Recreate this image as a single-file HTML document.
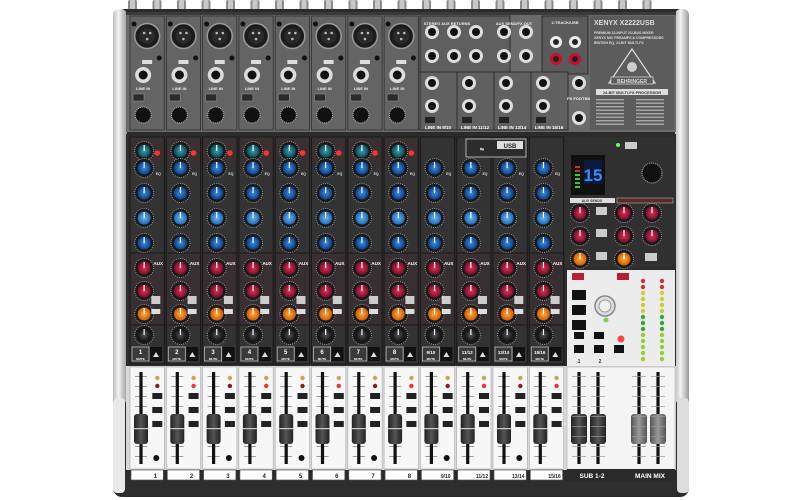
<!DOCTYPE html>
<html><head><meta charset="utf-8"><style>
html,body{margin:0;padding:0;background:#fff;width:800px;height:500px;overflow:hidden}
svg{display:block}
text{font-family:"Liberation Sans",sans-serif;font-weight:bold}
</style></head><body>
<svg id="s" width="800" height="500" viewBox="0 0 800 500" xmlns="http://www.w3.org/2000/svg">
<defs>
<linearGradient id="cheek" x1="0" x2="1"><stop offset="0" stop-color="#bdbdbd"/><stop offset=".4" stop-color="#f2f2f2"/><stop offset="1" stop-color="#9a9a9a"/></linearGradient>
<linearGradient id="cap" x1="0" x2="1"><stop offset="0" stop-color="#222"/><stop offset=".5" stop-color="#555"/><stop offset="1" stop-color="#222"/></linearGradient>
<linearGradient id="capg" x1="0" x2="1"><stop offset="0" stop-color="#555"/><stop offset=".5" stop-color="#999"/><stop offset="1" stop-color="#555"/></linearGradient>
<radialGradient id="blue"><stop offset="0" stop-color="#3b8fe0"/><stop offset="1" stop-color="#0d3f8a"/></radialGradient>
<radialGradient id="lblue"><stop offset="0" stop-color="#6ab4f0"/><stop offset="1" stop-color="#1f6bb8"/></radialGradient>
<radialGradient id="red"><stop offset="0" stop-color="#e0305a"/><stop offset="1" stop-color="#7a0e28"/></radialGradient>
<radialGradient id="org"><stop offset="0" stop-color="#ffb040"/><stop offset="1" stop-color="#d05a00"/></radialGradient>
<radialGradient id="teal"><stop offset="0" stop-color="#3aa0b0"/><stop offset="1" stop-color="#0c4a5a"/></radialGradient>
<radialGradient id="blk"><stop offset="0" stop-color="#555"/><stop offset="1" stop-color="#111"/></radialGradient>
</defs>
<g id="g"></g>
</svg>
<script>
var g=document.getElementById('g'),h='';
function R(x,y,w,hh,f,extra){h+='<rect x="'+x+'" y="'+y+'" width="'+w+'" height="'+hh+'" fill="'+f+'" '+(extra||'')+'/>';}
function C(x,y,r,f,extra){h+='<circle cx="'+x+'" cy="'+y+'" r="'+r+'" fill="'+f+'" '+(extra||'')+'/>';}
function T(x,y,s,t,f,a){h+='<text x="'+x+'" y="'+y+'" font-size="'+s+'" fill="'+(f||'#fff')+'" text-anchor="'+(a||'middle')+'">'+t+'</text>';}
function K(x,y,fill){C(x,y,9.5,'#1a1a1a','stroke="#999" stroke-width="1" stroke-dasharray="1 1.2"');C(x,y,6.5,fill);h+='<line x1="'+x+'" y1="'+y+'" x2="'+x+'" y2="'+(y-6)+'" stroke="#fff" stroke-width="1.2"/>';}
for(var i=0;i<22;i++){var x=128+i*24.5;R(x,0,9,10,'#8a8a8a','rx="2"');R(x+2,0,5,10,'#c8c8c8');}
R(113,9,576,488,'#2b2b2b','rx="9"');
R(113,9,14,395,'url(#cheek)','rx="6"');R(675,9,14,395,'url(#cheek)','rx="6"');
R(113,398,12,95,'#e8e8e8','rx="4"');R(677,398,12,95,'#dcdcdc','rx="4"');
R(126,12,550,120,'#6b6b6b');
R(126,12,550,3,'#3a3a3a');
var W=36.3,X0=129;
for(var i=0;i<8;i++){var x=X0+i*W,cx=x+W/2;
 R(x+1,16,W-2,114,'#646464','stroke="#2e2e2e" stroke-width=".8"');
 C(cx,36,12.5,'#1c1c1c','stroke="#9a9a9a" stroke-width="1.5"');C(cx,36,8,'#2a2a2a');
 C(cx-3,33,1.3,'#bbb');C(cx+3,33,1.3,'#bbb');C(cx,39,1.3,'#bbb');
 C(x+5,24,2.5,'#111');C(x+W-6,58,2.5,'#111');
 R(cx-5,60,10,4,'#ddd');
 C(cx-4,75,8,'#ddd');C(cx-4,75,4.5,'#111');
 T(cx-4,90,4,'LINE IN','#eee');
 R(x+4,94,11,7,'#2b2b2b','stroke="#999" stroke-width=".5"');
 C(cx-4,115,8,'#111','stroke="#aaa" stroke-width="1.2" stroke-dasharray="1 1"');
}
R(420,16,90,58,'#5f5f5f','stroke="#2e2e2e"');
for(var j=0;j<3;j++){C(432+j*22,32,7,'#ddd');C(432+j*22,32,4,'#111');C(432+j*22,56,7,'#ddd');C(432+j*22,56,4,'#111');}
for(var j=0;j<2;j++){C(504+j*22,32,7,'#ddd');C(504+j*22,32,4,'#111');C(504+j*22,56,7,'#ddd');C(504+j*22,56,4,'#111');}
T(447,25,4,'STEREO AUX RETURNS','#eee');T(514,25,4,'AUX SEND/FX OUT','#eee');
R(542,16,46,58,'#5a5a5a','stroke="#2e2e2e"');
C(556,42,6,'#eee');C(556,42,3,'#222');C(575,42,6,'#eee');C(575,42,3,'#222');
C(556,59,6,'#c8102e');C(556,59,3,'#222');C(575,59,6,'#c8102e');C(575,59,3,'#222');
T(565,24,4,'2-TRACK/USB','#eee');
for(var j=0;j<4;j++){var x=420+j*37;R(x,72,37,58,'#606060','stroke="#2e2e2e"');C(x+12,83,7,'#ddd');C(x+12,83,4,'#111');C(x+12,106,7,'#ddd');C(x+12,106,4,'#111');R(x+5,117,10,6,'#222');}
T(438,129,4.5,'LINE IN 9/10');T(475,129,4.5,'LINE IN 11/12');T(512,129,4.5,'LINE IN 13/14');T(549,129,4.5,'LINE IN 15/16');
C(579,83,7,'#ddd');C(579,83,4,'#111');C(579,118,7,'#ddd');C(579,118,4,'#111');T(579,100,4,'FX FOOTSW');
R(590,16,84,114,'#5c5c5c');
T(594,25,7,'XENYX X2222USB','#ddd','start');
h+='<text x="594" y="34" font-size="3.5" fill="#ddd">PREMIUM 22-INPUT 2/2-BUS MIXER</text><text x="594" y="39" font-size="3.5" fill="#ddd">XENYX MIC PREAMPS &amp; COMPRESSORS</text><text x="594" y="44" font-size="3.5" fill="#ddd">BRITISH EQ, 24-BIT MULTI-FX</text>';
h+='<polygon points="632,49 655,83 609,83" fill="none" stroke="#ddd" stroke-width="1.2"/>';C(632,67,5,'#ccc');
R(611,77,42,7,'#5c5c5c','stroke="#ddd" stroke-width=".7"');T(632,83,5,'BEHRINGER','#ddd');
R(596,89,72,6,'#ddd');T(632,94,4,'24-BIT MULTI-FX PROCESSOR','#333');
for(var r=0;r<8;r++){R(596,99+r*3.5,28,1.4,'#aaa');R(636,99+r*3.5,28,1.4,'#aaa');}
R(126,134,550,232,'#2c2c2c');
var labs=['9/10','11/12','13/14','15/16'];
for(var i=0;i<12;i++){var x=X0+i*W,cx=x+W/2-3;
 R(x+1,137,W-2,116,'#333','stroke="#1a1a1a"');
 R(x+1,253,W-2,72,'#372f31','stroke="#1a1a1a"');
 R(x+1,325,W-2,39,'#333','stroke="#1a1a1a"');
 if(i<8){R(x+2,140,W-4,22,'#3a3030');K(cx,151,'url(#teal)');C(x+W-8,153,2.8,'#f33');}
 K(cx,168,'url(#blue)');K(cx,193,'url(#blue)');K(cx,218,'url(#lblue)');K(cx,243,'url(#blue)');
 K(cx,268,'url(#red)');K(cx,291,'url(#red)');K(cx,314,'url(#org)');
 R(x+W-14,296,9,8,'#ccc');R(x+W-14,309,9,5,'#ddd');
 T(x+W-7,265,4.5,'AUX');T(x+W-7,175,3.5,'EQ','#ddd');
 K(cx,335,'url(#blk)');
 R(x+3,347,17,14,'#3a3a3a','stroke="#bbb" stroke-width=".8"');
 var lab=i<8?(i+1):labs[i-8];
 T(x+11.5,354,i<8?6:4.5,lab);T(x+11.5,360,3,'MUTE');
 R(x+21,347,12,14,'#111');
 h+='<polygon points="'+(x+24)+',357 '+(x+30)+',357 '+(x+27)+',352" fill="#ddd"/>';
}
R(466,139,60,18,'#2c2c2c','stroke="#ccc" stroke-width=".8"');R(497,141,26,8,'#ddd');T(510,148,6,'USB','#222');T(482,151,5,'⇋','#ddd');
R(565,137,110,130,'#303030');
R(571,155,34,40,'#111');R(584,160,18,24,'#0a1a3a');T(593,181,17,'15','#3c8cff');
for(var r=0;r<6;r++)R(575,166+r*4,5,2,r<2?'#c33':'#3c3');
R(625,142,12,7,'#ccc');C(618,145,2,'#6f6');
C(652,173,10,'#111','stroke="#888" stroke-width="1.5" stroke-dasharray="1 1"');
R(570,198,45,5,'#ddd');T(592,202,3.5,'AUX SENDS','#333');R(617,198,56,5,'#5a2a2a','stroke="#ccc" stroke-width=".5"');
K(580,213,'url(#red)');K(580,236,'url(#red)');K(580,259,'url(#org)');
R(596,207,11,8,'#ccc');R(596,229,11,8,'#ccc');R(596,252,11,8,'#ccc');
K(624,213,'url(#red)');K(652,213,'url(#red)');K(624,236,'url(#red)');K(652,236,'url(#red)');K(624,259,'url(#org)');R(645,253,12,8,'#ccc');
R(567,270,108,96,'#ececec');
R(572,273,12,7,'#b82030');R(617,273,12,7,'#b82030');
R(572,290,14,10,'#111');R(572,305,14,10,'#111');R(572,320,14,10,'#111');
C(605,306,10,'#ddd','stroke="#888" stroke-width="1.5"');C(605,306,6,'#eee','stroke="#999"');
C(621,339,3.5,'#f44');C(606,320,2.5,'#8c4');
R(574,345,10,8,'#111');R(594,345,10,8,'#111');R(574,332,10,7,'#111');R(594,332,10,7,'#111');R(614,345,10,8,'#111');
T(579,363,5,'1','#333');T(600,363,5,'2','#333');
var lc=['#c33','#c33','#cc3','#cc3','#cc3','#cc3','#3a3','#3a3','#3a3','#9c3','#9c3','#9c3','#9c3','#9c3'];
for(var r=0;r<14;r++){C(643,281+r*6,2.2,lc[r]);C(662,281+r*6,2.2,lc[r]);}
R(126,366,550,104,'#d9d9d9');
for(var i=0;i<12;i++){var x=X0+i*W,cx=x+12;
 R(x+1,367,W-2,102,'#f7f7f7','stroke="#aaa" stroke-width=".6"');
 for(var k=0;k<9;k++)R(cx-6,376+k*10,12,.7,'#777');
 R(cx-1.6,372,3.2,92,'#111');
 R(cx-7,414,14,30,'url(#cap)','rx="3"');R(cx-7,428,14,1.2,'#ccc');
 C(x+W-8,378,2.2,'#c9a55a');C(x+W-8,386,2.2,i%2?'#e33':'#8c1a1a');
 R(x+W-13,393,10,6,'#222');R(x+W-13,407,10,6,'#222');R(x+W-13,421,10,6,'#222');
 if(i%2==0)C(x+W-9,458,3,'#111');
 R(x+2,470,W-4,10,'#fff','stroke="#555" stroke-width=".7"');
 T(x+W-10,478,i<8?6:5,i<8?(i+1):labs[i-8],'#222');
}
R(567,367,108,103,'#f4f4f4','stroke="#aaa" stroke-width=".6"');
[579,598,639,658].forEach(function(cx,n){R(cx-1.6,372,3.2,92,'#111');R(cx-8,414,16,30,n<2?'url(#cap)':'url(#capg)','rx="3"');for(var k=0;k<9;k++)R(cx-7,376+k*10,14,.7,'#999');});
R(567,469,108,12,'#2a2a2a');T(592,478,6.5,'SUB 1-2');T(650,478,6.5,'MAIN MIX');
R(126,481,550,14,'#2e2e2e');
g.innerHTML=h;
</script>
</body></html>
